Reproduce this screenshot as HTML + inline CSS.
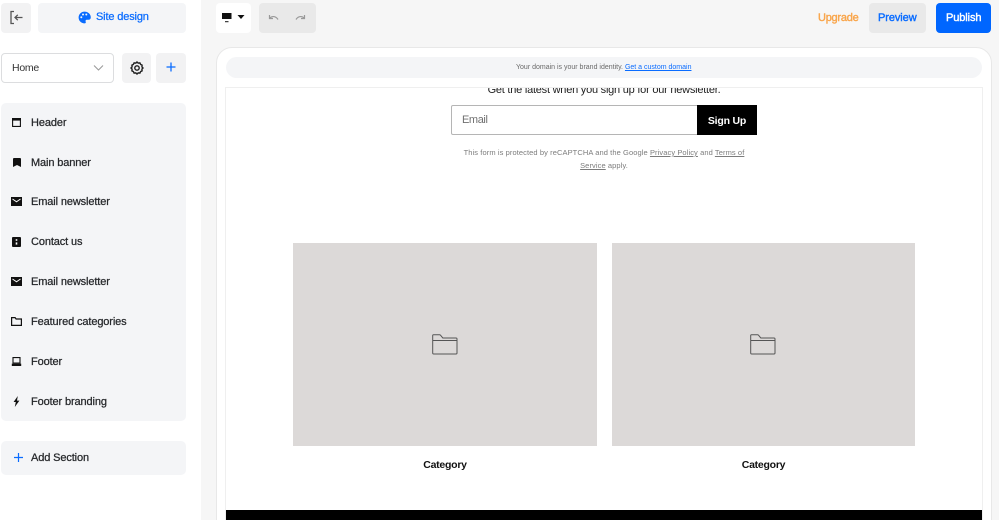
<!DOCTYPE html>
<html style="overflow:hidden;width:999px;height:520px"><head><meta charset="utf-8"><style>
*{box-sizing:border-box}
html,body{margin:0;padding:0}
body{width:999px;height:520px;overflow:hidden;background:#fff;font-family:"Liberation Sans",sans-serif;color:#202124}
#w{position:absolute;left:0;top:0;width:999px;height:520px;overflow:hidden;background:#fff}
.a{position:absolute}
.t{position:absolute;white-space:nowrap;line-height:16px}
.m{font-size:11px;letter-spacing:-.12px;-webkit-text-stroke:.25px currentColor;color:#26282b}
svg{position:absolute;display:block}
u{text-underline-offset:1px}
</style></head><body><div id="w">
<div class="a" style="left:201px;top:0;width:798px;height:520px;background:#f6f6f6"></div>

<div class="a" style="left:1px;top:3px;width:30px;height:30px;background:#f2f2f3;border-radius:4px"></div>
<svg style="left:9px;top:10px" width="15" height="15" viewBox="0 0 15 15" fill="none" stroke="#555" stroke-width="1.3"><path d="M5 1.5H2v12h3M13.5 7.5H6M8.8 4.8L6 7.5l2.8 2.7"/></svg>
<div class="a" style="left:38px;top:3px;width:148px;height:30px;background:#f4f5f7;border-radius:4px"></div>
<svg style="left:78px;top:11px" width="13" height="13" viewBox="0 0 13 13"><path d="M6.5.6a5.9 5.9 0 1 0 0 11.8c1.2 0 1.6-.9 1.2-1.7-.5-1 .1-1.9 1.2-1.9h1.500c1.500 0 2.400-1 2.400-2.400C12.800 3 10 .6 6.500.6z" fill="#0a6cff"/><circle cx="3.300" cy="6.200" r="1" fill="#f4f5f7"/><circle cx="5" cy="3.500" r="1" fill="#f4f5f7"/><circle cx="8.300" cy="3.500" r="1" fill="#f4f5f7"/></svg>
<div class="t m" style="left:96px;top:9px;color:#0a6cff;letter-spacing:-.15px">Site design</div>

<div class="a" style="left:1px;top:53px;width:113px;height:30px;background:#fff;border:1px solid #dcdddf;border-radius:4px"></div>
<div class="t" style="left:12px;top:60px;font-size:10.500px;letter-spacing:-.25px;color:#333">Home</div>
<svg style="left:93px;top:64px" width="11" height="8" viewBox="0 0 11 8" fill="none" stroke="#999" stroke-width="1"><path d="M1 1.500l4.500 4.500L10 1.500"/></svg>
<div class="a" style="left:122px;top:53px;width:29px;height:30px;background:#f2f2f3;border-radius:4px"></div>
<svg style="left:130px;top:61px" width="14" height="14" viewBox="0 0 14 14" fill="none" stroke="#222" stroke-width="1.400"><path d="M7 1l1.200 1.100 1.700-.2.700 1.500 1.500.8-.2 1.700L13 7l-1.100 1.100.2 1.700-1.500.8-.7 1.500-1.700-.2L7 13l-1.200-1.100-1.700.2-.7-1.500-1.500-.8.2-1.700L1 7l1.100-1.100-.2-1.700 1.500-.8.7-1.500 1.700.2z"/><circle cx="7" cy="7" r="2.200"/></svg>
<div class="a" style="left:156px;top:53px;width:30px;height:30px;background:#f2f2f3;border-radius:4px"></div>
<svg style="left:166px;top:62px" width="10" height="10" viewBox="0 0 10 10" stroke="#0a6cff" stroke-width="1.300"><path d="M5 .5v9M.5 5h9"/></svg>

<div class="a" style="left:1px;top:103px;width:185px;height:318px;background:#f4f5f7;border-radius:5px"></div>
<svg style="left:12px;top:118px" width="9" height="9" viewBox="0 0 9 9"><path d="M0 0h9v2.600H0z" fill="#111"/><path d="M.6 2.500v5.900h7.800V2.500" fill="none" stroke="#111" stroke-width="1.100"/></svg>
<div class="t m" style="left:31px;top:115px">Header</div>
<svg style="left:13px;top:158px" width="8" height="9" viewBox="0 0 8 9"><path d="M0 1q0-1 1-1h6q1 0 1 1v8L4 7 0 9z" fill="#111"/></svg>
<div class="t m" style="left:31px;top:155px">Main banner</div>
<svg style="left:11px;top:197px" width="11" height="9" viewBox="0 0 11 9"><path d="M0 0h11v9H0z" fill="#111"/><path d="M1.500 2l4 2.800 4-2.800" fill="none" stroke="#fff" stroke-width="1"/></svg>
<div class="t m" style="left:31px;top:194px">Email newsletter</div>
<svg style="left:12px;top:237px" width="9" height="10" viewBox="0 0 9 10"><rect width="9" height="10" rx="1" fill="#111"/><rect x="3.700" y="2.200" width="1.600" height="1.600" fill="#fff"/><rect x="3.700" y="5.400" width="1.600" height="2.200" fill="#fff"/></svg>
<div class="t m" style="left:31px;top:234px">Contact us</div>
<svg style="left:11px;top:277px" width="11" height="9" viewBox="0 0 11 9"><path d="M0 0h11v9H0z" fill="#111"/><path d="M1.500 2l4 2.800 4-2.800" fill="none" stroke="#fff" stroke-width="1"/></svg>
<div class="t m" style="left:31px;top:274px">Email newsletter</div>
<svg style="left:11px;top:317px" width="11" height="9" viewBox="0 0 11 9" fill="none" stroke="#111" stroke-width="1.200"><path d="M.6.6h3.500l1 1.400h5.300v6.400H.6z"/></svg>
<div class="t m" style="left:31px;top:314px">Featured categories</div>
<svg style="left:11px;top:357px" width="11" height="9" viewBox="0 0 11 9"><path d="M2 .6h7v5.400H2z" fill="none" stroke="#111" stroke-width="1.100"/><path d="M.8 6.600h9.400V9H.8z" fill="#111"/></svg>
<div class="t m" style="left:31px;top:354px">Footer</div>
<svg style="left:13px;top:396px" width="7" height="11" viewBox="0 0 7 11"><path d="M4.800 0L.6 6h2.200L1.800 11 6.400 4.600H4z" fill="#111"/></svg>
<div class="t m" style="left:31px;top:394px">Footer branding</div>

<div class="a" style="left:1px;top:441px;width:185px;height:34px;background:#f4f5f7;border-radius:5px"></div>
<svg style="left:14px;top:453px" width="9" height="9" viewBox="0 0 9 9" stroke="#0a6cff" stroke-width="1.200"><path d="M4.500 0v9M0 4.500h9"/></svg>
<div class="t m" style="left:31px;top:450px">Add Section</div>

<div class="a" style="left:216px;top:3px;width:35px;height:30px;background:#fff;border-radius:4px"></div>
<svg style="left:221px;top:12px" width="25" height="11" viewBox="0 0 25 11"><path d="M1 1h9.500v6H1z" fill="#111"/><path d="M4 9.200h3.500v1H4z" fill="#111"/><path d="M16.500 3h7l-3.500 4z" fill="#111"/></svg>
<div class="a" style="left:259px;top:3px;width:57px;height:30px;background:#e9e9e9;border-radius:4px"></div>
<svg style="left:268px;top:14px" width="11" height="8" viewBox="0 0 11 8" fill="none" stroke="#999" stroke-width="1.200"><path d="M1.500 1v3.500H5M1.500 4.500C3.500 2 7.500 1.500 10 5.500"/></svg>
<svg style="left:295px;top:14px" width="11" height="8" viewBox="0 0 11 8" fill="none" stroke="#999" stroke-width="1.200"><path d="M9.500 1v3.500H6M9.500 4.500C7.500 2 3.500 1.500 1 5.500"/></svg>

<div class="t m" style="left:818px;top:10px;color:#f9a54a;letter-spacing:-.25px;-webkit-text-stroke:.4px #f9a54a">Upgrade</div>
<div class="a" style="left:869px;top:3px;width:57px;height:30px;background:#e9e9e9;border-radius:4px"></div>
<div class="t m" style="left:878px;top:10px;color:#0a6cff;letter-spacing:-.08px;-webkit-text-stroke:.4px #0a6cff">Preview</div>
<div class="a" style="left:936px;top:3px;width:55px;height:30px;background:#0066ff;border-radius:4px"></div>
<div class="t m" style="left:946px;top:10px;color:#fff;letter-spacing:-.1px;-webkit-text-stroke:.4px #fff">Publish</div>

<div class="a" style="left:216px;top:47px;width:776px;height:490px;background:#fff;border:1px solid #e8e8e8;border-radius:16px"></div>
<div class="a" style="left:226px;top:57px;width:756px;height:21px;background:#f4f5f7;border-radius:11px"></div>
<div class="t" style="left:516px;top:60px;font-size:7px;color:#6a6a6a">Your domain is your brand identity. <u style="color:#0a6cff">Get a custom domain</u></div>
<div class="a" style="left:225px;top:87px;width:758px;height:440px;border:1px solid #efefef;overflow:hidden">
<div class="t" style="left:0;width:756px;text-align:center;top:-6px;font-size:11px;color:#222;letter-spacing:-.23px">Get the latest when you sign up for our newsletter.</div>
</div>
<div class="a" style="left:451px;top:105px;width:247px;height:30px;background:#fff;border:1px solid #b5b5b5;border-radius:2px 0 0 2px"></div>
<div class="t" style="left:462px;top:112px;font-size:11px;letter-spacing:-.4px;color:#707070">Email</div>
<div class="a" style="left:697px;top:105px;width:60px;height:30px;background:#000"></div>
<div class="t" style="left:697px;width:60px;text-align:center;top:113px;font-size:10.500px;font-weight:bold;letter-spacing:-.2px;color:#fff">Sign Up</div>
<div class="t" style="left:451px;width:306px;text-align:center;top:145px;font-size:7.500px;color:#7c7c7c;letter-spacing:.09px">This form is protected by reCAPTCHA and the Google <u>Privacy Policy</u> and <u>Terms of</u></div>
<div class="t" style="left:451px;width:306px;text-align:center;top:158px;font-size:7.500px;color:#7c7c7c;letter-spacing:.09px"><u>Service</u> apply.</div>

<div class="a" style="left:293px;top:243px;width:304px;height:203px;background:#dcd9d8"></div>
<div class="a" style="left:612px;top:243px;width:303px;height:203px;background:#dcd9d8"></div>
<svg style="left:432px;top:334px" width="26" height="21" viewBox="0 0 26 21" fill="none" stroke="#555" stroke-width="1"><path d="M.7 6.500V1.500q0-.8.8-.8h6q.6 0 1 .5l2.300 2.800H24q1 0 1 1V19q0 1-1 1H1.700q-1 0-1-1zM.7 6.500H25"/></svg>
<svg style="left:750px;top:334px" width="26" height="21" viewBox="0 0 26 21" fill="none" stroke="#555" stroke-width="1"><path d="M.7 6.500V1.500q0-.8.8-.8h6q.6 0 1 .5l2.300 2.800H24q1 0 1 1V19q0 1-1 1H1.700q-1 0-1-1zM.7 6.500H25"/></svg>
<div class="t" style="left:293px;width:304px;text-align:center;top:457px;font-size:10.500px;font-weight:bold;letter-spacing:-.25px;color:#111">Category</div>
<div class="t" style="left:612px;width:303px;text-align:center;top:457px;font-size:10.500px;font-weight:bold;letter-spacing:-.25px;color:#111">Category</div>
<div class="a" style="left:226px;top:510px;width:756px;height:10px;background:#000"></div>
</div></body></html>
